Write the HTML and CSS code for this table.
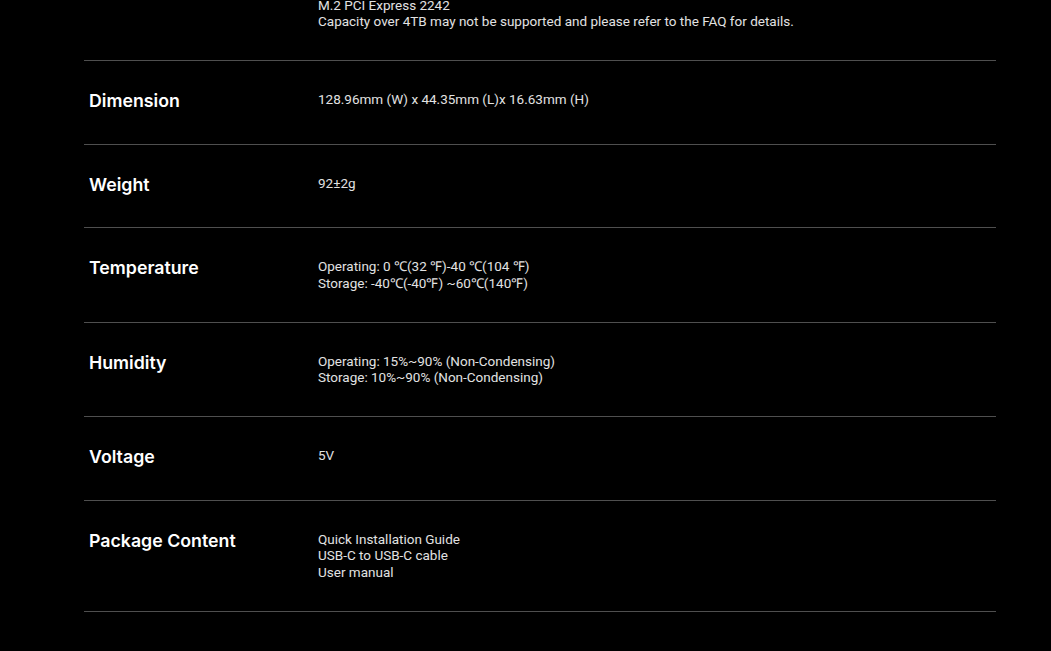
FILE: index.html
```html
<!DOCTYPE html>
<html lang="en">
<head>
<meta charset="utf-8">
<title>Specifications</title>
<link rel="stylesheet" href="styles.css">
</head>
<body>
<div class="specs">
  <div class="row row--partial">
    <div class="label"></div>
    <div class="value">M.2 PCI Express 2242<br>Capacity over 4TB may not be supported and please refer to the FAQ for details.</div>
  </div>
  <div class="row">
    <div class="label">Dimension</div>
    <div class="value">128.96mm (W) x 44.35mm (L)x 16.63mm (H)</div>
  </div>
  <div class="row">
    <div class="label">Weight</div>
    <div class="value">92±2g</div>
  </div>
  <div class="row">
    <div class="label">Temperature</div>
    <div class="value">Operating: 0 ℃(32 ℉)-40 ℃(104 ℉)<br>Storage: -40℃(-40℉) ~60℃(140℉)</div>
  </div>
  <div class="row">
    <div class="label">Humidity</div>
    <div class="value">Operating: 15%~90% (Non-Condensing)<br>Storage: 10%~90% (Non-Condensing)</div>
  </div>
  <div class="row">
    <div class="label">Voltage</div>
    <div class="value">5V</div>
  </div>
  <div class="row">
    <div class="label">Package Content</div>
    <div class="value">Quick Installation Guide<br>USB-C to USB-C cable<br>User manual</div>
  </div>
</div>
</body>
</html>
```

FILE: styles.css
```css
html, body {
  margin: 0;
  padding: 0;
  background: #000;
}
body {
  height: 651px;
  overflow: hidden;
}
.specs {
  width: 912px;
  margin: 0 0 0 84px;
}
.row {
  display: grid;
  grid-template-columns: 234px 1fr;
  padding: 30px 0 30.5px;
  border-bottom: 1px solid #4f4f4f;
}
.row--partial {
  padding-top: 0;
  margin-top: -3.5px;
}
.label {
  padding-left: 5px;
  padding-bottom: 2px;
  font-family: "Inter", "Noto Sans", sans-serif;
  font-weight: 600;
  font-size: 17.75px;
  line-height: 20px;
  color: #fff;
}
.value {
  font-family: "Roboto", "Liberation Sans", sans-serif;
  font-size: 13.5px;
  line-height: 16.5px;
  color: #e2e2e2;
}
```
